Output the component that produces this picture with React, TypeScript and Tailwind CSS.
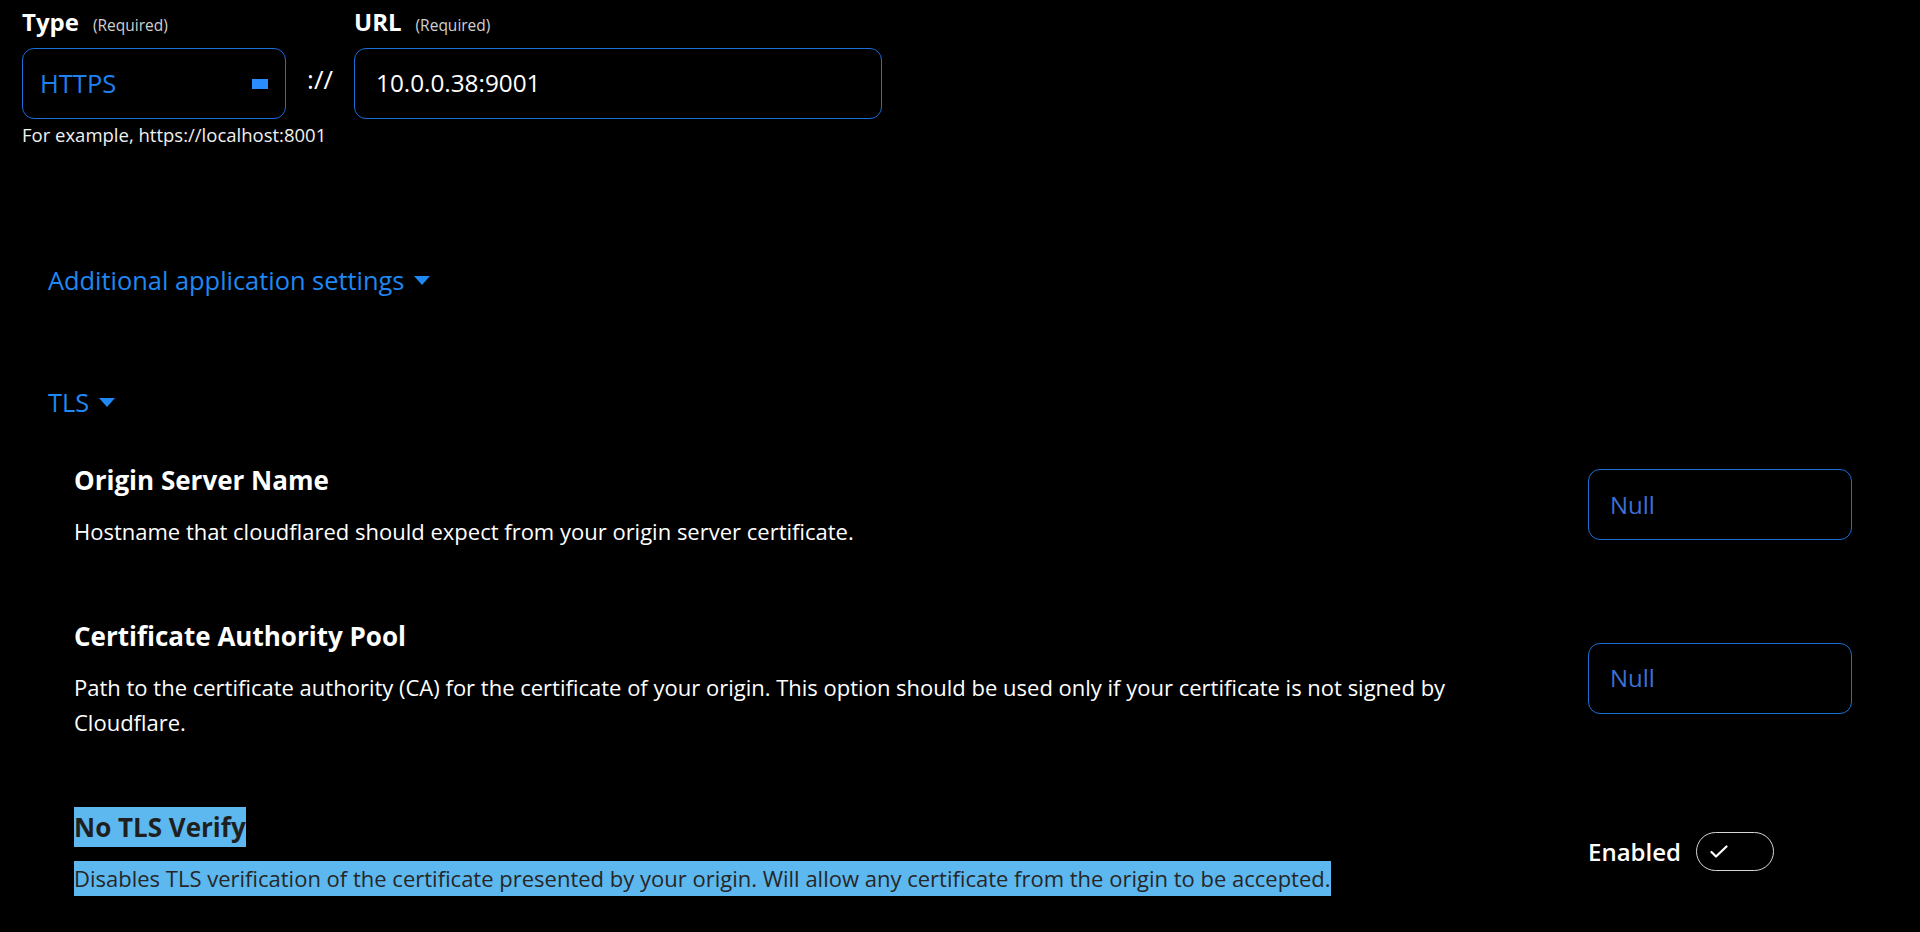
import React from "react";

const font = { fontFamily: '"Open Sans", "Noto Sans", sans-serif' };

function Caret() {
  return (
    <svg className="ml-[10px] h-[9px] w-[16px] shrink-0" viewBox="0 0 16 9" fill="#1f88f2">
      <path d="M0 0h16L8 9z" />
    </svg>
  );
}

function NullInput() {
  return (
    <div className="flex h-[71px] w-[264px] items-center rounded-[12px] border-[1.5px] border-[#1a6fd8] px-[21px] text-[24px] text-[#3d6fd4]">
      Null
    </div>
  );
}

function Toggle() {
  return (
    <div className="flex items-center">
      <span className="text-[24px] font-semibold text-white">Enabled</span>
      <div className="ml-[15px] flex h-[39px] w-[78px] items-center rounded-full border-[1.5px] border-[#d6d6d6] pl-[13px]">
        <svg className="h-[13px] w-[18px]" viewBox="0 0 18 13" fill="none" stroke="white" strokeWidth={2.2} strokeLinecap="round" strokeLinejoin="round">
          <path d="M1.5 7l4.5 4.5L16.5 1.5" />
        </svg>
      </div>
    </div>
  );
}

type Row = {
  title: string;
  desc: string;
  right: React.ReactNode;
  selected?: boolean;
};

const rows: Row[] = [
  {
    title: "Origin Server Name",
    desc: "Hostname that cloudflared should expect from your origin server certificate.",
    right: <NullInput />,
  },
  {
    title: "Certificate Authority Pool",
    desc: "Path to the certificate authority (CA) for the certificate of your origin. This option should be used only if your certificate is not signed by Cloudflare.",
    right: <NullInput />,
  },
  {
    title: "No TLS Verify",
    desc: "Disables TLS verification of the certificate presented by your origin. Will allow any certificate from the origin to be accepted.",
    right: <Toggle />,
    selected: true,
  },
];

function SettingRow({ row }: { row: Row }) {
  return (
    <div className="flex items-center pl-[74px]">
      <div className="w-[1430px]">
        <h3 className="text-[26px] font-bold leading-[40px]">
          <span className={row.selected ? "inline-block bg-[#5db8ef] text-[#1f1f1f]" : ""}>{row.title}</span>
        </h3>
        <p className="mt-[14px] text-[22px] leading-[35px]">
          <span className={row.selected ? "inline-block bg-[#5db8ef] text-[#262626]" : ""}>{row.desc}</span>
        </p>
      </div>
      <div className="ml-[84px] w-[264px]">{row.right}</div>
    </div>
  );
}

export default function App() {
  return (
    <div className="min-h-screen bg-black text-white" style={font}>
      {/* Origin */}
      <div className="flex pl-[22px] pt-[6px]">
        <div className="w-[264px]">
          <div className="flex items-baseline leading-[32px]">
            <span className="text-[24px] font-bold">Type</span>
            <span className="ml-[14px] text-[15.5px] text-[#d0d0d0]">(Required)</span>
          </div>
          <div className="mt-[7px] flex h-[71px] items-center justify-between rounded-[12px] border-[1.5px] border-[#1a6fd8] pl-[17px] pr-[17px]">
            <span className="text-[25.5px] text-[#1f80f0]">HTTPS</span>
            <span className="h-[10px] w-[16px] bg-[#2a8cff]" />
          </div>
          <p className="mt-[4px] whitespace-nowrap text-[18.5px] leading-[24px] text-[#f0f0f0]">For example, https://localhost:8001</p>
        </div>
        <div className="flex w-[68px] justify-center pt-[38px]">
          <span className="text-[26px] leading-[71px]">://</span>
        </div>
        <div className="w-[528px]">
          <div className="flex items-baseline leading-[32px]">
            <span className="text-[24px] font-bold">URL</span>
            <span className="ml-[14px] text-[15.5px] text-[#d0d0d0]">(Required)</span>
          </div>
          <div className="mt-[7px] flex h-[71px] items-center rounded-[12px] border-[1.5px] border-[#1a6fd8] px-[21px]">
            <span className="text-[24.3px]">10.0.0.38:9001</span>
          </div>
        </div>
      </div>

      <button className="ml-[48px] mt-[115px] flex items-center text-[25.4px] leading-[36px] text-[#1f88f2]">
        Additional application settings
        <Caret />
      </button>

      <button className="ml-[48px] mt-[86px] flex items-center text-[25.4px] leading-[36px] text-[#1f88f2]">
        TLS
        <Caret />
      </button>

      <div className="mt-[40px] flex flex-col gap-[67px]">
        {rows.map((r) => (
          <SettingRow key={r.title} row={r} />
        ))}
      </div>
    </div>
  );
}
